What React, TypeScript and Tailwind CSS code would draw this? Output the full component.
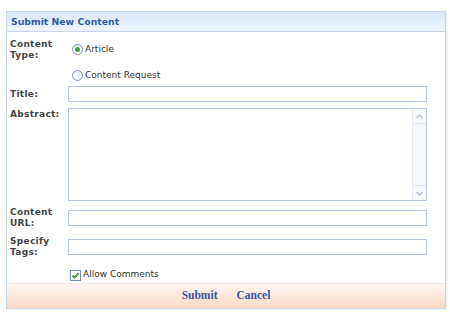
import React from "react";

const labelCls =
  "w-[58px] shrink-0 text-[9px] leading-[11px] font-bold text-[#444444] tracking-[0.3px]";
const inputCls =
  "h-[16px] w-[359px] border border-[#b6c8e4] bg-white outline-none";

function Radio({ checked }: { checked?: boolean }) {
  return (
    <span className="flex h-[11px] w-[11px] items-center justify-center rounded-full border border-[#7f97b8] bg-gradient-to-b from-[#e9eef5] to-white">
      {checked && <span className="h-[5px] w-[5px] rounded-full bg-[#3fa33a]" />}
    </span>
  );
}

function Check() {
  return (
    <span className="flex h-[11px] w-[11px] items-center justify-center border border-[#6f8db8] bg-white">
      <svg width="9" height="9" viewBox="0 0 9 9">
        <path d="M1.5 4.5 L3.6 6.6 L7.6 2" fill="none" stroke="#2f9a2a" strokeWidth="1.8" />
      </svg>
    </span>
  );
}

function Chevron({ up }: { up?: boolean }) {
  return (
    <svg width="7" height="5" viewBox="0 0 7 5">
      <path
        d={up ? "M0.5 4 L3.5 1 L6.5 4" : "M0.5 1 L3.5 4 L6.5 1"}
        fill="none"
        stroke="#a9b8cf"
        strokeWidth="1.2"
      />
    </svg>
  );
}

export default function App() {
  return (
    <div
      className="h-[318px] w-[450px] bg-white pl-[6px] pt-[11px] text-[#333]"
      style={{ fontFamily: '"DejaVu Sans", Verdana, sans-serif' }}
    >
      <div className="w-[440px] border border-[#c6d5ec] shadow-[2px_0_2px_rgba(0,0,0,0.06)]">
        {/* header */}
        <div className="flex h-[20px] items-center border-b border-[#c6d5ec] bg-gradient-to-b from-[#dae7f9] to-[#eef4fd] pl-[4px] text-[9.3px] font-bold text-[#2f5ea8]">
          Submit New Content
        </div>

        {/* body */}
        <div className="pl-[3px]">
          <div className="mt-[5px] flex h-[22px]">
            <div className={labelCls + " pt-[2px]"}>
              Content
              <br />
              Type:
            </div>
            <div className="flex items-center gap-[2px] pl-[4px] pt-[3px] text-[9px]">
              <Radio checked />
              <span>Article</span>
            </div>
          </div>

          <div className="mt-[4px] flex h-[22px]">
            <div className="w-[58px] shrink-0" />
            <div className="flex items-center gap-[2px] pl-[4px] pt-[3px] text-[9px]">
              <Radio />
              <span>Content Request</span>
            </div>
          </div>

          <div className="mt-[1px] flex items-center">
            <div className={labelCls}>Title:</div>
            <input className={inputCls} />
          </div>

          <div className="mt-[6px] flex">
            <div className={labelCls + " pt-[1px]"}>Abstract:</div>
            <div className="flex h-[93px] w-[359px] border border-[#b6c8e4] bg-white">
              <textarea className="flex-1 resize-none outline-none" />
              <div className="flex w-[14px] flex-col justify-between border-l border-[#e6ecf5] bg-[#f7f9fc]">
                <div className="flex h-[15px] items-center justify-center border-b border-[#dde5f1]">
                  <Chevron up />
                </div>
                <div className="flex h-[15px] items-center justify-center border-t border-[#dde5f1]">
                  <Chevron />
                </div>
              </div>
            </div>
          </div>

          <div className="mt-[6px] flex items-center">
            <div className={labelCls}>
              Content
              <br />
              URL:
            </div>
            <input className={inputCls} />
          </div>

          <div className="mt-[7px] flex items-center">
            <div className={labelCls}>
              Specify
              <br />
              Tags:
            </div>
            <input className={inputCls} />
          </div>

          <div className="mt-[6px] flex h-[19px] items-center">
            <div className="w-[58px] shrink-0" />
            <div className="flex items-center gap-[2px] pl-[2px] pt-[3px] text-[9px]">
              <Check />
              <span>Allow Comments</span>
            </div>
          </div>
        </div>

        {/* footer */}
        <div
          className="flex h-[25px] items-center justify-center gap-[19px] border-t border-[#ece6e2] bg-gradient-to-b from-[#fef6f1] to-[#fbd9c4] text-[11.5px] font-bold text-[#3a55a8]"
          style={{ fontFamily: '"Liberation Serif", "Times New Roman", serif' }}
        >
          <span>Submit</span>
          <span>Cancel</span>
        </div>
      </div>
    </div>
  );
}
